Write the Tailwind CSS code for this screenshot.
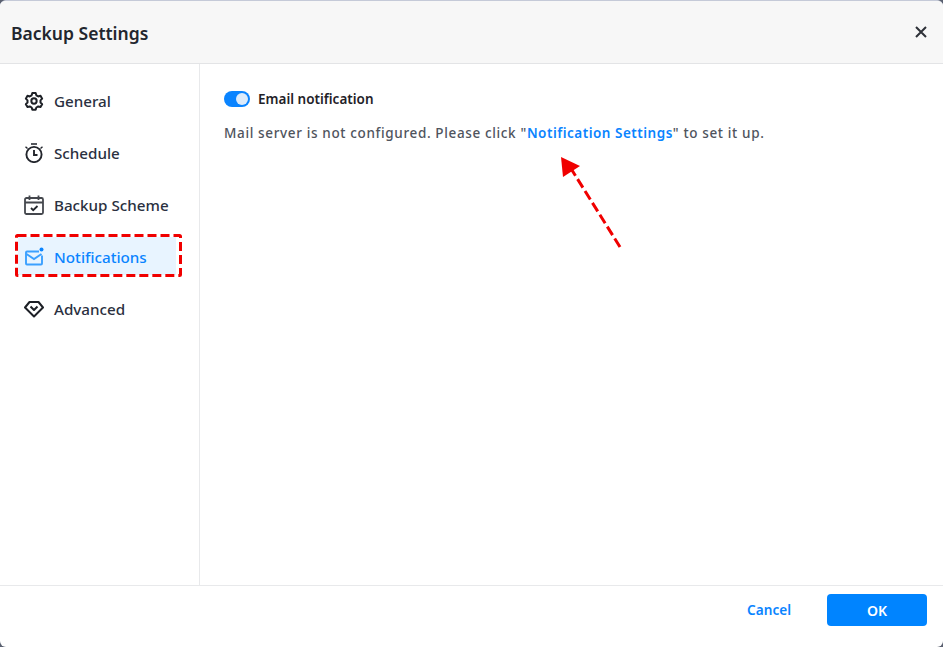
<!DOCTYPE html>
<html><head><script src="https://cdn.jsdelivr.net/npm/@tailwindcss/browser@4"></script></head>
<body class="m-0 bg-[#5a6070]">
<div class="relative flex h-[647px] w-[943px] flex-col overflow-hidden rounded-[6px] border-t border-[#c5cad8] bg-white font-['Noto_Sans',sans-serif]">
  <header class="flex h-[63px] shrink-0 items-center justify-between border-b border-[#e3e4e6] bg-[#f7f7f7] pl-[11px] pr-[15px]">
    <h1 class="pt-[2px] text-[17.5px] font-semibold text-[#22262e]">Backup Settings</h1>
    <svg class="h-[14px] w-[14px]" viewBox="0 0 14 14" fill="none" stroke="#2e3138" stroke-width="2"><path d="M2 2l10 10M12 2L2 12"/></svg>
  </header>
  <div class="flex min-h-0 flex-1">
    <nav class="flex w-[200px] shrink-0 flex-col gap-[12px] border-r border-[#e8e9eb] pl-[15px] pr-[17px] pt-[17px]">
      <a class="flex h-[40px] items-center gap-[10px] px-[9px] text-[15.2px] font-medium text-[#2a3040]">
        <svg class="h-[20px] w-[20px]" viewBox="0 0 24 24" fill="none" stroke="#1d2026" stroke-width="2.4" stroke-linejoin="round"><path d="M10 2.500h4l.8 2.700 2.300 1.300 2.700-.7 2 3.400-2 2v2.600l2 2-2 3.400-2.700-.7-2.300 1.300-.8 2.700h-4l-.8-2.700-2.300-1.300-2.700.7-2-3.400 2-2v-2.600l-2-2 2-3.400 2.700.7 2.300-1.300z"/><circle cx="12" cy="12" r="3.200"/></svg>
        General</a>
      <a class="flex h-[40px] items-center gap-[10px] px-[9px] text-[15.2px] font-medium text-[#2a3040]">
        <svg class="h-[20px] w-[20px]" viewBox="0 0 20 20" fill="none" stroke="#23262d" stroke-width="1.900"><path d="M7 1h6" stroke-width="2" stroke="#55585e"/><path d="M1.500 3.800l2 1.800M18.500 3.800l-2 1.800" stroke-width="1.400"/><circle cx="10" cy="11.500" r="7.600"/><path d="M10 7v5h3.500"/></svg>
        Schedule</a>
      <a class="flex h-[40px] items-center gap-[10px] px-[9px] text-[15.2px] font-medium text-[#2a3040]">
        <svg class="h-[20px] w-[20px]" viewBox="0 0 20 20" fill="none" stroke="#44474d" stroke-width="1.800"><rect x="1" y="3" width="18" height="16" rx="1.500"/><path d="M1 7.500h18M5.500 .5v4.500M14.500 .5v4.500"/><path d="M7 13l2.200 2.200L13.500 11" stroke="#23262d"/></svg>
        Backup Scheme</a>
      <a class="relative flex h-[40px] items-center gap-[10px] px-[9px] text-[15.2px] font-medium text-[#0a84ff]">
        <span class="absolute bottom-[2px] left-[3px] right-[6px] top-0 bg-[#e8f4ff]"></span>
        <svg class="relative h-[20px] w-[20px]" viewBox="0 0 20 20" fill="none" stroke="#3ba0ff" stroke-width="1.900"><path d="M15 4.500H3a1 1 0 0 0-1 1v11a1 1 0 0 0 1 1h14a1 1 0 0 0 1-1V8.500"/><path d="M2.500 7L10 12l7.500-5"/><circle cx="17.500" cy="2.500" r="2" fill="#0a84ff" stroke="none"/></svg>
        <span class="relative">Notifications</span>
        <svg class="pointer-events-none absolute left-0 top-[-3px] h-[43px] w-[167px]" viewBox="0 0 167 43" fill="none"><rect x="1.500" y="1.500" width="164" height="40" rx="1" stroke="#f00000" stroke-width="3" stroke-dasharray="9 4"/></svg>
      </a>
      <a class="flex h-[40px] items-center gap-[10px] px-[9px] text-[15.2px] font-medium text-[#2a3040]">
        <svg class="h-[20px] w-[20px]" viewBox="0 0 20 20" fill="none" stroke="#1d2026" stroke-width="2" stroke-linejoin="round"><path d="M5.500 3h9l4.500 5.500L10 17.500 1 8.500z"/><path d="M6.500 7.500L10 11l3.500-3.500"/></svg>
        Advanced</a>
    </nav>
    <main class="flex-1 pl-[24px] pt-[26px]">
      <div class="flex h-[18px] items-center gap-[8px]">
        <span class="relative h-[16px] w-[26px] rounded-full bg-[#0a84ff]"><span class="absolute right-[2px] top-[2px] h-[12px] w-[12px] rounded-full bg-[#dcebfb]"></span></span>
        <span class="pt-[1px] text-[13.5px] font-semibold text-[#1f2228]">Email notification</span>
      </div>
      <p class="mt-[15px] text-[13.5px] font-medium tracking-[0.64px] text-[#4f545d]">Mail server is not configured. Please click "<span class="font-semibold tracking-[0.5px] text-[#0a84ff]">Notification Settings</span>" to set it up.</p>
    </main>
  </div>
  <footer class="flex h-[62px] shrink-0 items-start justify-end gap-[36px] border-t border-[#e8e9eb] pr-[16px] pt-[8px]">
    <span class="pt-[6px] text-[13.6px] font-semibold text-[#0a84ff]">Cancel</span>
    <button class="h-[32px] w-[100px] rounded-[4px] bg-[#0084ff] text-[14px] font-semibold text-white">OK</button>
  </footer>
  <svg class="pointer-events-none absolute left-[550px] top-[150px] h-[110px] w-[80px]" viewBox="0 0 80 110" fill="none"><path d="M70 96L20 16" stroke="#f00000" stroke-width="3" stroke-dasharray="10 4"/><path d="M11 6l19 9-17 11z" fill="#f00000"/></svg>
</div>
</body></html>
